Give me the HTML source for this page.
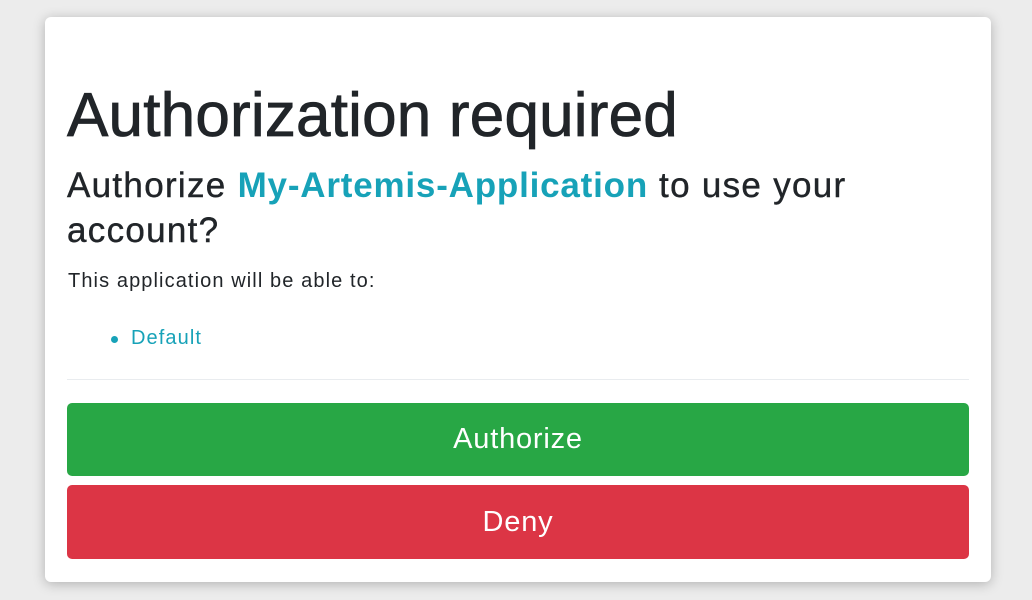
<!DOCTYPE html>
<html><head><style>
body{margin:0;background:#ececec;width:1032px;height:600px;overflow:hidden;font-family:"Liberation Sans",sans-serif;color:#212529}
.card{position:absolute;left:45px;top:17px;width:946px;height:565px;background:#fff;border-radius:6px;box-shadow:0 2px 12px rgba(0,0,0,.25)}
h1{position:absolute;left:22px;top:64px;margin:0;font-size:62px;letter-spacing:0.2px;font-weight:normal;line-height:70px;white-space:nowrap;-webkit-text-stroke:0.8px #212529}
h2{position:absolute;left:22px;top:146px;margin:0;font-size:35px;letter-spacing:1.3px;font-weight:normal;line-height:45px;width:850px;-webkit-text-stroke:0.4px #212529}
h2 b{color:#17a2b8;-webkit-text-stroke:0;letter-spacing:0.8px}
p{position:absolute;left:23px;top:253px;margin:0;font-size:20px;letter-spacing:1.1px}
.li{position:absolute;left:86px;top:310px;font-size:20px;letter-spacing:1.1px;color:#17a2b8}
.li:before{content:"";position:absolute;left:-20px;top:9px;width:7px;height:7px;border-radius:50%;background:#17a2b8}
hr{position:absolute;left:22px;top:362px;width:902px;margin:0;border:0;border-top:1px solid #e9ecef}
.btn{position:absolute;left:22px;width:902px;border-radius:5px;color:#fff;font-size:29px;letter-spacing:0.8px;text-align:center}
</style></head><body>
<div class="card">
<h1>Authorization required</h1>
<h2>Authorize <b>My-Artemis-Application</b> to use your account?</h2>
<p>This application will be able to:</p>
<div class="li">Default</div>
<hr>
<div class="btn" style="top:386px;height:73px;line-height:73px;background:#28a745">Authorize</div>
<div class="btn" style="top:468px;height:74px;line-height:74px;background:#dc3545">Deny</div>
</div>
</body></html>
